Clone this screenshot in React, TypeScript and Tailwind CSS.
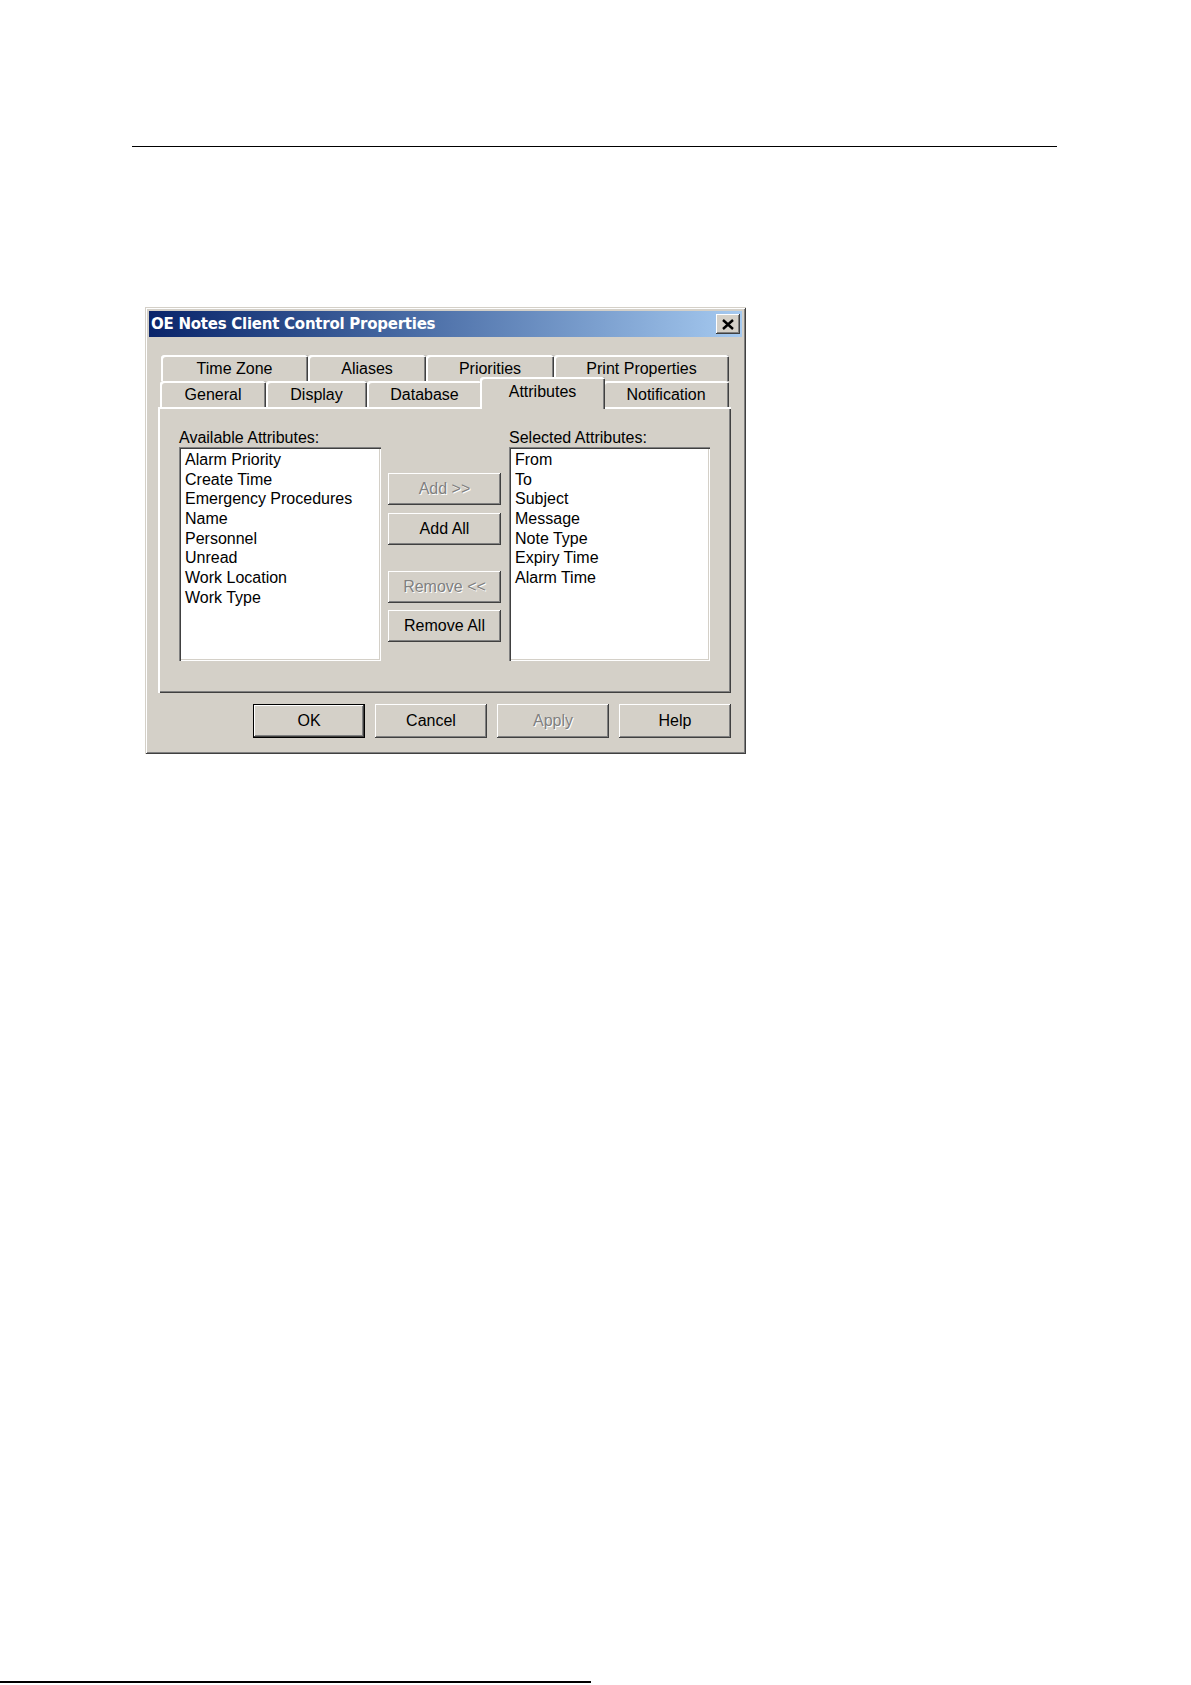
import React from "react";

const raised =
  "shadow-[inset_-1px_-1px_0_#404040,inset_1px_1px_0_#ffffff,inset_-2px_-2px_0_#808080]";

function Btn({
  label,
  disabled,
  isDefault,
  className,
}: {
  label: string;
  disabled?: boolean;
  isDefault?: boolean;
  className?: string;
}) {
  return (
    <div
      className={
        "flex items-center justify-center bg-[#d4d0c8] text-[16px] leading-none " +
        (isDefault
          ? "border border-black shadow-[inset_-1px_-1px_0_#404040,inset_1px_1px_0_#ffffff,inset_-2px_-2px_0_#808080] "
          : "shadow-[inset_-1px_-1px_0_#404040,inset_1px_1px_0_#ffffff,inset_-2px_-2px_0_#808080] ") +
        (disabled ? "text-[#808080] [text-shadow:1px_1px_0_#ffffff] " : "text-black ") +
        (className ?? "")
      }
    >
      {label}
    </div>
  );
}

function Tab({
  label,
  w,
  selected,
}: {
  label: string;
  w: string;
  selected?: boolean;
}) {
  if (selected) {
    return (
      <div
        className={
          "relative z-10 -mx-[2px] -mb-[2px] h-[32px] rounded-t-[3px] bg-[#d4d0c8] flex items-start justify-center pt-[5px] text-[16px] leading-[20px] shadow-[inset_2px_2px_0_#ffffff,inset_-1px_0_0_#404040,inset_-2px_0_0_#808080] " +
          w
        }
      >
        {label}
      </div>
    );
  }
  return (
    <div
      className={
        "h-[26px] rounded-t-[3px] bg-[#d4d0c8] flex items-center justify-center pt-[1px] text-[16px] leading-[20px] shadow-[inset_2px_2px_0_#ffffff,inset_-1px_0_0_#404040,inset_-2px_0_0_#808080] " +
        w
      }
    >
      {label}
    </div>
  );
}

function ListBox({ items, w }: { items: string[]; w: string }) {
  return (
    <div
      className={
        "h-[214px] bg-white pt-[3px] pl-[6px] shadow-[inset_1px_1px_0_#808080,inset_2px_2px_0_#404040,inset_-1px_-1px_0_#ffffff,inset_-2px_-2px_0_#d4d0c8] " +
        w
      }
    >
      {items.map((it) => (
        <div key={it} className="text-[16px] leading-[19.66px] text-black whitespace-nowrap">
          {it}
        </div>
      ))}
    </div>
  );
}

export default function App() {
  return (
    <div className="relative flex h-[1685px] w-[1191px] flex-col bg-white font-['Liberation_Sans',Arial,sans-serif] text-black">
      <div className="ml-[132px] mt-[146px] h-px w-[925px] bg-black" />

      <div className="ml-[145px] mt-[160px] flex h-[447px] w-[601px] flex-col bg-[#d4d0c8] p-[4px] shadow-[inset_1px_1px_0_#d4d0c8,inset_-1px_-1px_0_#404040,inset_2px_2px_0_#ffffff,inset_-2px_-2px_0_#808080]">
        {/* Title bar */}
        <div className="flex h-[26px] items-center justify-between bg-gradient-to-r from-[#0a246a] to-[#a6caf0] pl-[2px] pr-[2px]">
          <span className="font-['DejaVu_Sans',sans-serif] text-[15px] font-bold tracking-[-0.25px] text-white">
            OE Notes Client Control Properties
          </span>
          <div className={"flex h-[20px] w-[24px] items-center justify-center bg-[#d4d0c8] " + raised}>
            <svg width="12" height="11" viewBox="0 0 12 11">
              <path d="M1 1 L11 10 M11 1 L1 10" stroke="#000" strokeWidth="2.4" />
            </svg>
          </div>
        </div>

        {/* Tabs */}
        <div className="mt-[18px] flex flex-col">
          <div className="ml-[12px] flex h-[26px] items-end">
            <Tab label="Time Zone" w="w-[147px]" />
            <Tab label="Aliases" w="w-[118px]" />
            <Tab label="Priorities" w="w-[128px]" />
            <Tab label="Print Properties" w="w-[175px]" />
          </div>
          <div className="ml-[11px] flex h-[26px] items-end">
            <Tab label="General" w="w-[106px]" />
            <Tab label="Display" w="w-[101px]" />
            <Tab label="Database" w="w-[115px]" />
            <Tab label="Attributes" w="w-[125px]" selected />
            <Tab label="Notification" w="w-[126px]" />
          </div>

          {/* Panel */}
          <div className="ml-[9px] flex h-[286px] w-[573px] items-start bg-[#d4d0c8] pl-[21px] pt-[21px] shadow-[inset_2px_2px_0_#ffffff,inset_-1px_-1px_0_#404040,inset_-2px_-2px_0_#808080]">
            <div className="flex flex-col">
              <div className="h-[19px] text-[16px] leading-[19px]">Available Attributes:</div>
              <ListBox
                w="w-[202px]"
                items={[
                  "Alarm Priority",
                  "Create Time",
                  "Emergency Procedures",
                  "Name",
                  "Personnel",
                  "Unread",
                  "Work Location",
                  "Work Type",
                ]}
              />
            </div>
            <div className="ml-[7px] flex w-[113px] flex-col pt-[45px]">
              <Btn label="Add >>" disabled className="h-[32px]" />
              <Btn label="Add All" className="mt-[8px] h-[32px]" />
              <Btn label="Remove <<" disabled className="mt-[26px] h-[32px]" />
              <Btn label="Remove All" className="mt-[7px] h-[32px]" />
            </div>
            <div className="ml-[8px] flex flex-col">
              <div className="h-[19px] text-[16px] leading-[19px]">Selected Attributes:</div>
              <ListBox
                w="w-[201px]"
                items={[
                  "From",
                  "To",
                  "Subject",
                  "Message",
                  "Note Type",
                  "Expiry Time",
                  "Alarm Time",
                ]}
              />
            </div>
          </div>
        </div>

        {/* Bottom buttons */}
        <div className="mt-[11px] flex justify-end gap-[10px] pr-[11px]">
          <Btn label="OK" isDefault className="h-[34px] w-[112px]" />
          <Btn label="Cancel" className="h-[34px] w-[112px]" />
          <Btn label="Apply" disabled className="h-[34px] w-[112px]" />
          <Btn label="Help" className="h-[34px] w-[112px]" />
        </div>
      </div>

      <div className="mb-[2px] mt-auto h-[2px] w-[591px] bg-black" />
    </div>
  );
}
